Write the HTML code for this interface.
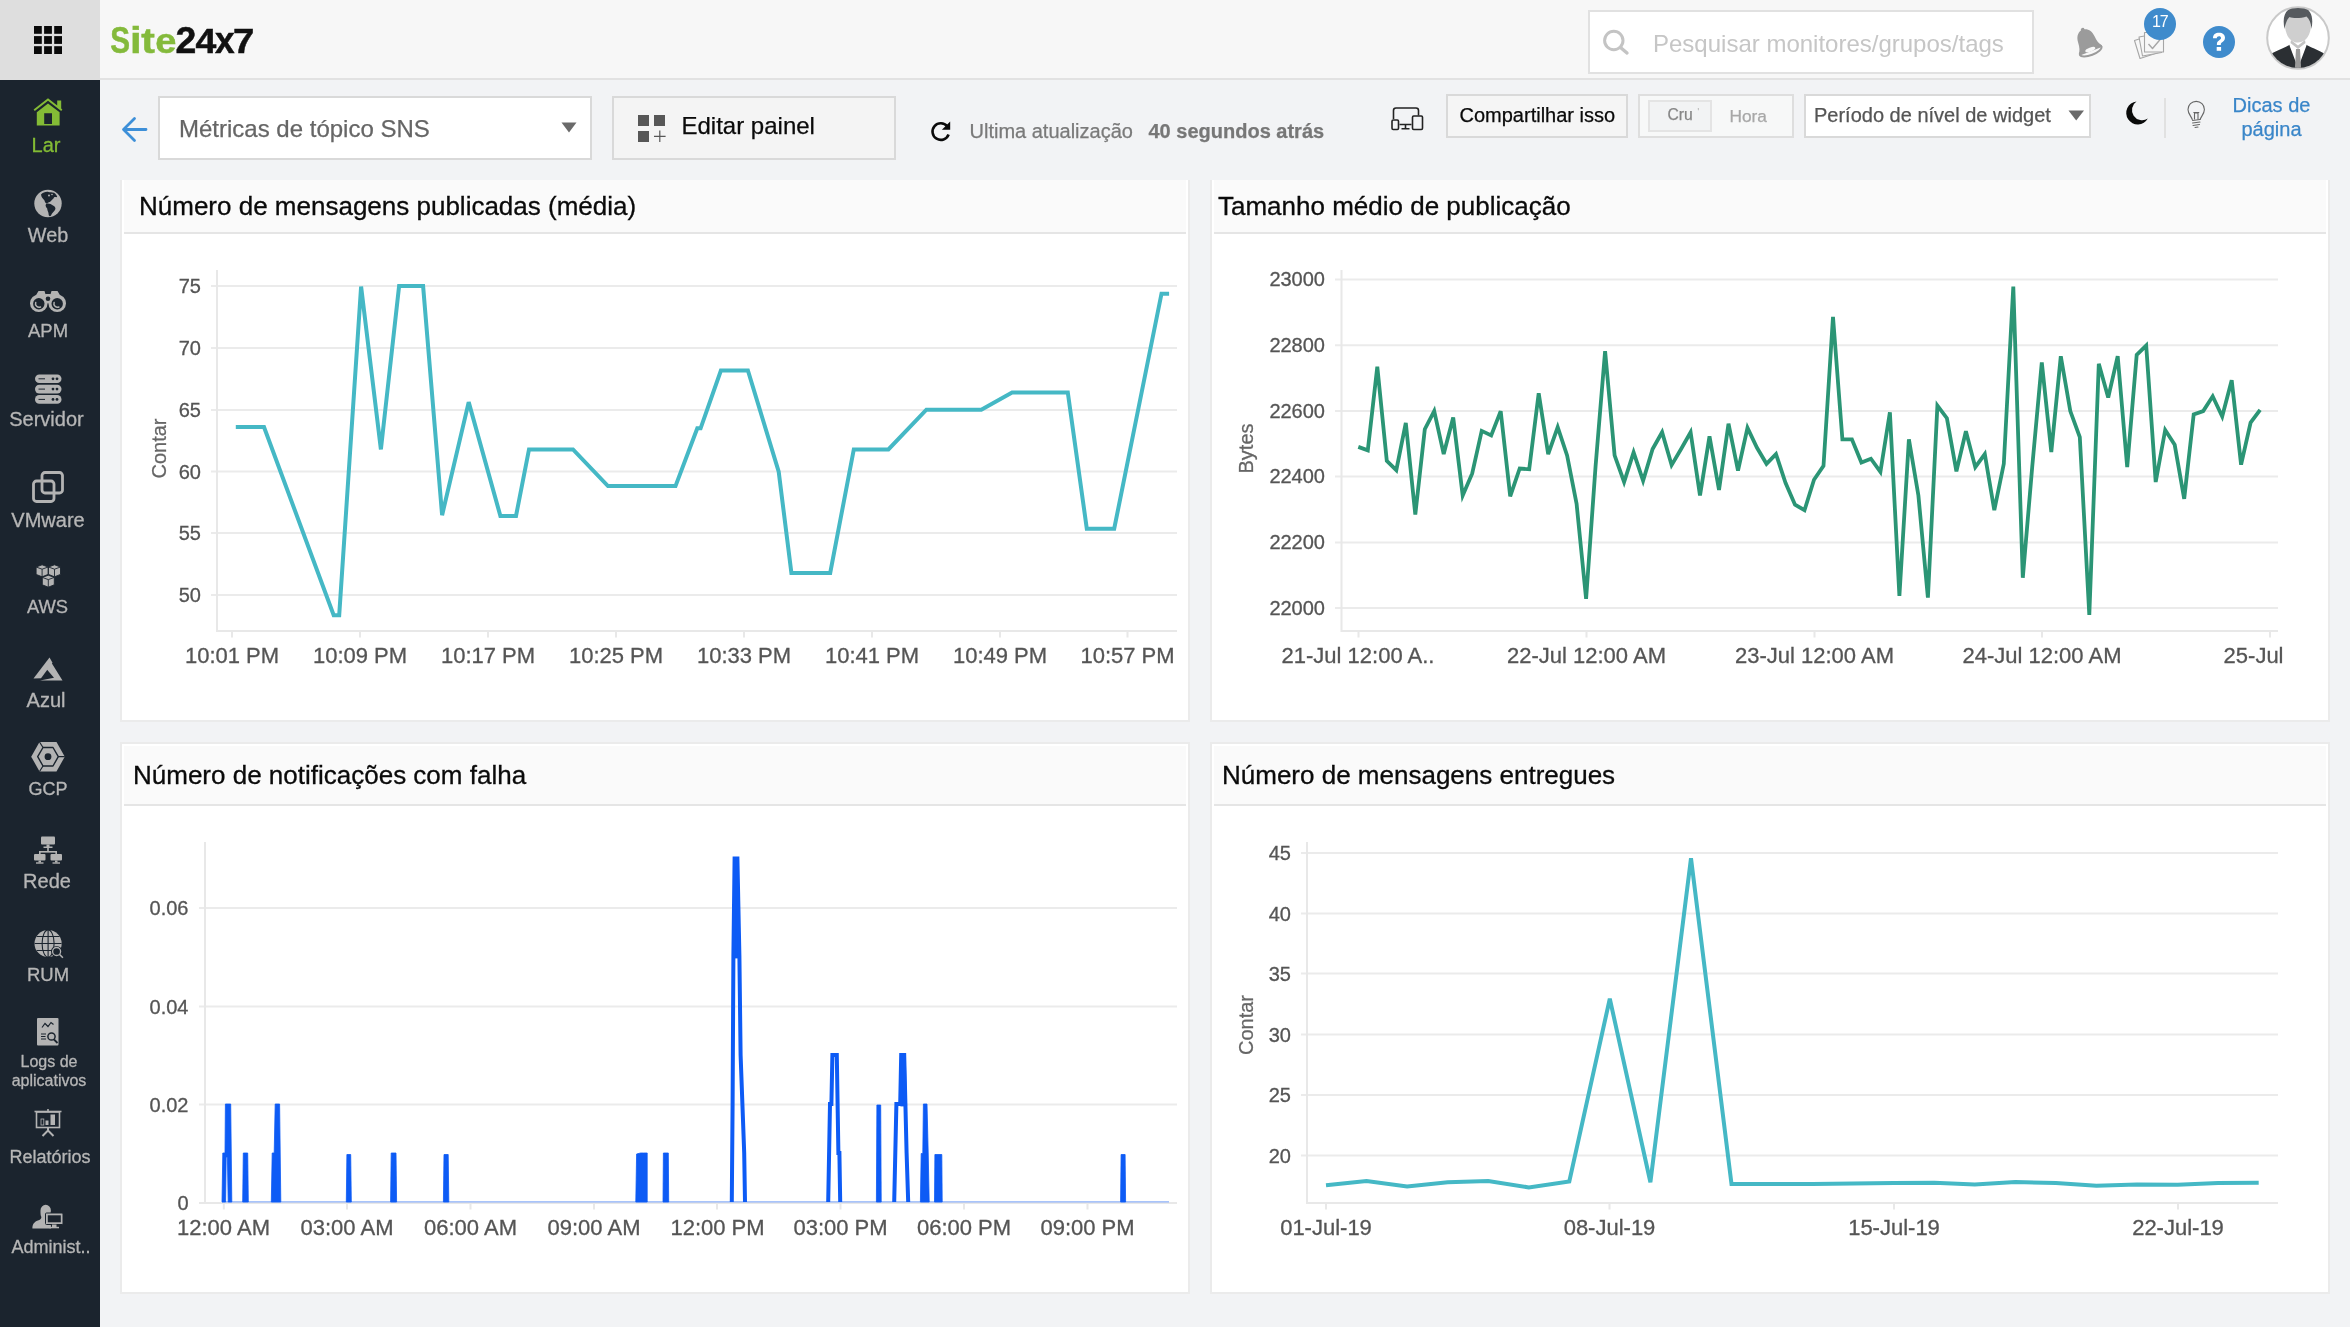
<!DOCTYPE html>
<html lang="pt">
<head>
<meta charset="utf-8">
<title>Site24x7</title>
<style>
*{box-sizing:border-box;margin:0;padding:0}
html,body{width:2350px;height:1327px;overflow:hidden;background:#f2f3f5;font-family:"Liberation Sans",sans-serif;}
.abs{position:absolute}
#page{position:relative;width:2350px;height:1327px;overflow:hidden;will-change:transform}
#hdr{position:absolute;left:0;top:0;width:2350px;height:80px;background:#f7f7f7;border-bottom:2px solid #e2e2e2}
#gridbtn{position:absolute;left:0;top:0;width:100px;height:80px;background:#dedede}
#side{position:absolute;left:0;top:80px;width:100px;height:1247px;background:#1b242e}
.sl{position:absolute;left:0;width:100px;text-align:center;color:#b6b6b6;-webkit-text-stroke:0.3px;font-size:20px;line-height:24px;white-space:nowrap}
.logo{position:absolute;left:110px;top:15.5px;font-size:36px;font-weight:bold;letter-spacing:-0.55px;-webkit-text-stroke:0.5px;line-height:50px;white-space:nowrap}
.search{position:absolute;left:1588px;top:10px;width:446px;height:64px;border:2px solid #e1e1e1;background:#fff}
.search span{position:absolute;left:63px;top:17.700px;font-size:24px;line-height:28px;color:#c6c6c6;white-space:nowrap}
.box{position:absolute;border:2px solid #d9d9d9}
.t{position:absolute;white-space:nowrap;line-height:1;-webkit-text-stroke:0.25px}
.panel{position:absolute;background:#fff;border:2px solid #ebebeb}
.ph{position:absolute;background:#fafafa;border-bottom:2px solid #e5e5e5}
.pt{position:absolute;font-size:26px;color:#0a0a0a;-webkit-text-stroke:0.3px #0a0a0a;white-space:nowrap;line-height:30px}
svg{position:absolute;left:0;top:0;overflow:visible}
svg text{font-family:"Liberation Sans",sans-serif}
</style>
</head>
<body>
<div id="page">

<!-- ================= PANELS ================= -->
<div class="panel" style="left:120px;top:170px;width:1070px;height:552px"></div>
<div class="ph" style="left:124px;top:174px;width:1062px;height:60px"></div>
<div class="panel" style="left:1210px;top:170px;width:1120px;height:552px"></div>
<div class="ph" style="left:1214px;top:174px;width:1112px;height:60px"></div>
<div class="panel" style="left:120px;top:742px;width:1070px;height:552px"></div>
<div class="ph" style="left:124px;top:746px;width:1062px;height:60px"></div>
<div class="panel" style="left:1210px;top:742px;width:1120px;height:552px"></div>
<div class="ph" style="left:1214px;top:746px;width:1112px;height:60px"></div>

<div class="pt" style="left:139px;top:190.700px">Número de mensagens publicadas (média)</div>
<div class="pt" style="left:1218px;top:190.700px">Tamanho médio de publicação</div>
<div class="pt" style="left:133px;top:760px">Número de notificações com falha</div>
<div class="pt" style="left:1222px;top:760px">Número de mensagens entregues</div>

<!-- ================= CHARTS ================= -->
<svg width="2350" height="1327" viewBox="0 0 2350 1327">
<g fill="none" stroke="#ebebeb" stroke-width="2">
<!-- chart1 grid -->
<path d="M211 286H1177M211 348H1177M211 410H1177M211 471.5H1177M211 533H1177M211 595H1177"/>
<!-- chart2 grid -->
<path d="M1335 279.600H2278M1335 345.200H2278M1335 411H2278M1335 476.600H2278M1335 542.400H2278M1335 608H2278"/>
<!-- chart3 grid -->
<path d="M199 908H1177M199 1006.5H1177M199 1104.5H1177"/>
<!-- chart4 grid -->
<path d="M1301 853H2278M1301 913.5H2278M1301 973.5H2278M1301 1034.5H2278M1301 1095H2278M1301 1155.5H2278"/>
</g>
<g fill="none" stroke="#e8e8e8" stroke-width="2">
<!-- axes -->
<path d="M217 270V631H1177"/>
<path d="M1341.500 270V631H2278"/>
<path d="M205 842V1203H1177M199 1203H205"/>
<path d="M1307 842V1203H2278"/>
<!-- x ticks -->
<path d="M232 631V637.500M360 631V637.500M488 631V637.500M616 631V637.500M744 631V637.500M872 631V637.500M1000 631V637.500M1127.5 631V637.500"/>
<path d="M1358.5 631V637.500M1586.5 631V637.500M1814.5 631V637.500M2042 631V637.500M2270 631V637.500"/>
<path d="M223.800 1203V1209.500M347 1203V1209.500M470.5 1203V1209.500M594 1203V1209.500M717 1203V1209.500M840.5 1203V1209.500M964 1203V1209.500M1087.5 1203V1209.500"/>
<path d="M1326 1203V1209.500M1609.5 1203V1209.500M1894 1203V1209.500M2178 1203V1209.500"/>
</g>
<!-- y labels -->
<g font-size="20" fill="#555" stroke="#555" stroke-width="0.300" text-anchor="end">
<text x="201" y="293">75</text><text x="201" y="355">70</text><text x="201" y="417">65</text><text x="201" y="478.5">60</text><text x="201" y="540">55</text><text x="201" y="602">50</text>
<text x="1325" y="286">23000</text><text x="1325" y="351.5">22800</text><text x="1325" y="417.5">22600</text><text x="1325" y="483">22400</text><text x="1325" y="549">22200</text><text x="1325" y="614.5">22000</text>
<text x="188.500" y="915">0.06</text><text x="188.500" y="1013.5">0.04</text><text x="188.500" y="1111.5">0.02</text><text x="188.500" y="1210">0</text>
<text x="1291" y="860">45</text><text x="1291" y="920.5">40</text><text x="1291" y="980.5">35</text><text x="1291" y="1041.5">30</text><text x="1291" y="1102">25</text><text x="1291" y="1162.5">20</text>
</g>
<!-- axis titles -->
<g font-size="20" fill="#666" stroke="#666" stroke-width="0.250" text-anchor="middle">
<text transform="translate(165.500 448.5) rotate(-90)">Contar</text>
<text transform="translate(1252.500 448.5) rotate(-90)" font-size="20">Bytes</text>
<text transform="translate(1252.500 1025) rotate(-90)">Contar</text>
</g>
<!-- x labels -->
<g font-size="22" fill="#555" stroke="#555" stroke-width="0.300" text-anchor="middle">
<text x="232" y="663">10:01 PM</text><text x="360" y="663">10:09 PM</text><text x="488" y="663">10:17 PM</text><text x="616" y="663">10:25 PM</text><text x="744" y="663">10:33 PM</text><text x="872" y="663">10:41 PM</text><text x="1000" y="663">10:49 PM</text><text x="1127.5" y="663">10:57 PM</text>
<text x="1358" y="663">21-Jul 12:00 A..</text><text x="1586.5" y="663">22-Jul 12:00 AM</text><text x="1814.5" y="663">23-Jul 12:00 AM</text><text x="2042" y="663">24-Jul 12:00 AM</text><text x="2283.500" y="663" text-anchor="end">25-Jul</text>
<text x="223.500" y="1235">12:00 AM</text><text x="347" y="1235">03:00 AM</text><text x="470.5" y="1235">06:00 AM</text><text x="594" y="1235">09:00 AM</text><text x="717.5" y="1235">12:00 PM</text><text x="840.5" y="1235">03:00 PM</text><text x="964" y="1235">06:00 PM</text><text x="1087.5" y="1235">09:00 PM</text>
<text x="1326" y="1235">01-Jul-19</text><text x="1609.5" y="1235">08-Jul-19</text><text x="1894" y="1235">15-Jul-19</text><text x="2178" y="1235">22-Jul-19</text>
</g>
<!-- series -->
<polyline fill="none" stroke="#45b8c5" stroke-width="4" stroke-linejoin="miter" points="235.8,427.0 264.0,427.0 333.7,615.2 339.2,615.2 361.1,286.6 380.9,449.4 399.1,286.0 423.1,286.0 442.1,515.2 468.7,402.1 500.4,516.0 516.0,516.0 529.0,449.4 573.0,449.4 608.0,486.1 675.5,486.1 697.3,428.3 700.6,428.3 720.9,370.5 747.9,370.5 778.7,471.7 791.4,573.0 830.2,573.0 853.8,449.4 888.4,449.4 926.4,409.7 981.3,409.7 1012.1,392.4 1067.8,392.4 1086.8,528.7 1114.2,528.7 1161.5,293.7 1169.1,293.7"/>
<polyline fill="none" stroke="#2b9575" stroke-width="3.800" stroke-linejoin="miter" points="1358.3,446.9 1367.8,450.3 1377.3,366.7 1386.8,460.9 1396.3,470.1 1405.8,422.9 1415.3,514.5 1424.8,429.2 1434.2,411.1 1443.7,454.1 1453.2,417.4 1462.7,495.5 1472.2,473.5 1481.7,430.9 1491.2,435.5 1500.7,411.1 1510.2,496.3 1519.7,468.5 1529.2,469.3 1538.7,393.3 1548.2,454.1 1557.7,427.1 1567.1,455.4 1576.6,503.9 1586.1,598.9 1595.6,465.9 1605.1,351.1 1614.6,455.4 1624.1,482.0 1633.6,452.4 1643.1,480.7 1652.6,449.0 1662.1,432.2 1671.6,465.1 1681.1,449.0 1690.6,432.2 1700.0,495.5 1709.5,436.4 1719.0,490.0 1728.5,423.7 1738.0,470.6 1747.5,427.9 1757.0,447.8 1766.5,463.8 1776.0,454.1 1785.5,482.8 1795.0,504.7 1804.5,510.2 1814.0,479.8 1823.5,465.9 1833.0,316.9 1842.4,439.3 1851.9,439.3 1861.4,462.5 1870.9,458.7 1880.4,471.8 1889.9,412.3 1899.4,595.9 1908.9,439.3 1918.4,495.5 1927.9,597.6 1937.4,405.6 1946.9,418.2 1956.4,471.4 1965.9,431.3 1975.3,467.2 1984.8,454.1 1994.3,510.2 2003.8,463.8 2013.3,286.6 2022.8,577.8 2032.3,465.9 2041.8,362.5 2051.3,452.0 2060.8,356.2 2070.3,411.1 2079.8,437.2 2089.3,614.9 2098.8,363.8 2108.2,397.6 2117.7,356.2 2127.2,467.2 2136.7,354.9 2146.2,345.6 2155.7,482.0 2165.2,430.0 2174.7,444.8 2184.2,498.8 2193.7,414.4 2203.2,411.1 2212.7,396.3 2222.2,416.5 2231.7,380.2 2241.1,464.7 2250.6,422.5 2260.1,409.8"/>
<polyline fill="none" stroke="#45b8c5" stroke-width="4" stroke-linejoin="miter" points="1326.0,1185.2 1366.5,1181.0 1407.1,1186.5 1447.7,1182.3 1488.2,1181.0 1528.8,1187.4 1569.3,1181.4 1609.8,998.7 1650.4,1182.3 1691.0,858.2 1731.5,1184.0 1772.0,1184.0 1812.6,1184.0 1853.2,1183.6 1893.7,1183.1 1934.2,1182.7 1974.8,1184.4 2015.3,1181.9 2055.9,1183.1 2096.4,1185.7 2137.0,1184.4 2177.6,1184.8 2218.1,1183.1 2258.7,1182.7"/>
<!-- chart3 -->
<path d="M222 1201.800H1169" stroke="#8db0f8" stroke-width="1.200" fill="none"/>
<g fill="#0d5bf5" stroke="#0d5bf5" stroke-width="0.800" stroke-linejoin="round">
<polygon points="222.0,1202.0 222.8,1153.0 225.0,1153.0 225.4,1104.0 230.7,1104.0 231.8,1202.0 228.2,1202.0 227.4,1157.0 226.2,1157.0 225.6,1202.0"/>
<polygon points="242.7,1202.0 243.3,1153.0 247.7,1153.0 248.3,1202.0"/>
<polygon points="271.3,1202.0 272.2,1153.0 274.2,1153.0 275.2,1104.0 279.6,1104.0 280.8,1202.0"/>
<polygon points="346.3,1202.0 346.9,1154.5 350.7,1154.5 351.3,1202.0"/>
<polygon points="390.6,1202.0 391.2,1153.0 396.0,1153.0 396.6,1202.0"/>
<polygon points="443.4,1202.0 444.0,1154.5 448.2,1154.5 448.8,1202.0"/>
<polygon points="635.8,1202.0 636.6,1154.0 640.5,1153.0 643.5,1153.0 647.2,1153.0 647.2,1202.0"/>
<polygon points="663.0,1202.0 663.4,1153.0 668.3,1153.0 668.7,1202.0"/>
<polygon points="876.4,1202.0 876.9,1105.0 880.7,1105.0 881.2,1202.0"/>
<polygon points="934.5,1202.0 934.9,1154.5 941.8,1154.5 942.2,1202.0"/>
<polygon points="1120.6,1202.0 1121.1,1154.5 1125.1,1154.5 1125.6,1202.0"/>
<polygon points="733.2,958.0 734.4,858.0 737.6,858.0 739.6,958.0"/>
<polygon points="920.4,1202.0 921.2,1153.5 922.8,1153.5 923.4,1104.0 927.0,1104.0 928.2,1153.0 929.2,1202.0"/>
<polygon points="900.4,1106.0 900.9,1054.5 905.2,1054.5 906.6,1106.0"/>
</g>
<g fill="none" stroke="#0d5bf5" stroke-width="4" stroke-linejoin="miter">
<polyline points="731.8,1202.0 732.6,1104.0 733.4,956.0 734.6,858.5 737.4,858.5 739.4,956.0 740.6,1055.0 742.4,1104.0 744.2,1153.0 745.0,1202.0"/>
<polyline points="828.2,1202.0 830.0,1104.0 831.4,1104.0 832.4,1055.0 836.8,1055.0 838.4,1153.0 839.4,1153.0 840.2,1202.0"/>
<polyline points="894.2,1202.0 896.4,1104.0 900.2,1104.0 901.2,1055.0 904.2,1055.0 906.6,1153.0 908.2,1202.0"/>
</g>

</svg>

<!-- toolbar cover (hides top of first row panels) -->
<div class="abs" style="left:100px;top:80px;width:2250px;height:100px;background:#f2f3f5"></div>

<!-- ================= TOOLBAR ================= -->
<div class="box" style="left:158px;top:96px;width:434px;height:64px;background:#fff"></div>
<div class="t" style="left:179px;top:114.5px;font-size:24px;color:#666;line-height:28px">Métricas de tópico SNS</div>
<div class="box" style="left:612px;top:96px;width:284px;height:64px;background:#f4f4f4"></div>
<div class="t" style="left:681.5px;top:112px;font-size:24px;color:#0a0a0a;line-height:28px">Editar painel</div>
<div class="t" style="left:969.5px;top:119px;font-size:20px;color:#7a7a7a;line-height:24px">Ultima atualização</div>
<div class="t" style="left:1148.5px;top:119px;font-size:20px;color:#777;font-weight:bold;line-height:24px">40 segundos atrás</div>
<div class="box" style="left:1446px;top:94px;width:182px;height:44px;background:#f5f5f5"></div>
<div class="t" style="left:1459.500px;top:103px;font-size:20px;color:#0a0a0a;line-height:24px">Compartilhar isso</div>
<div class="box" style="left:1638px;top:94px;width:156px;height:44px;background:#f7f8f8;border-color:#dedede"></div>
<div class="box" style="left:1648px;top:100px;width:64px;height:32px;background:#f2f3f4;border-color:#e4e4e4"></div>
<div class="t" style="left:1667.500px;top:105.200px;font-size:15.700px;color:#868686;line-height:20px">Cru</div>
<div class="t" style="left:1697.500px;top:105px;font-size:9px;color:#bbb;line-height:12px">'</div>
<div class="t" style="left:1729.500px;top:105.500px;font-size:17.300px;color:#a8a8a8;line-height:20px">Hora</div>
<div class="box" style="left:1804px;top:94px;width:287px;height:44px;background:#fff"></div>
<div class="t" style="left:1814px;top:103px;font-size:20px;color:#555;line-height:24px">Período de nível de widget</div>
<div class="t" style="left:2211.500px;top:93px;width:120px;text-align:center;font-size:20px;color:#3a86c9;line-height:24px;white-space:normal">Dicas de<br>página</div>
<!-- back arrow -->
<svg width="2350" height="1327" viewBox="0 0 2350 1327" style="pointer-events:none">
<path d="M146 129.500H124.500M134.500 118.500L123.500 129.500L134.500 140.500" fill="none" stroke="#3d8fd8" stroke-width="2.800" stroke-linecap="round" stroke-linejoin="round"/>
<!-- select1 caret -->
<path d="M561.500 122.500H576.500L569 132.500Z" fill="#6a6a6a"/>
<!-- edit icon -->
<g fill="#575757"><rect x="638" y="115" width="11" height="11"/><rect x="654" y="115" width="11" height="11"/><rect x="638" y="131" width="11" height="11"/>
<path d="M659.200 130.500h1.200v5.200h5.200v1.200h-5.200v5.200h-1.200v-5.200h-5.200v-1.200h5.200z"/></g>
<!-- refresh icon -->
<path d="M947.300 126.400A8.300 8.300 0 1 0 948.600 134.500" fill="none" stroke="#0a0a0a" stroke-width="2.600"/>
<path d="M950.200 121.500V129.800H941.900Z" fill="#0a0a0a"/>
<!-- devices icon -->
<g fill="none" stroke="#222" stroke-width="1.600" stroke-linejoin="round">
<path d="M1393.500 119V110.500Q1393.500 108 1396 108H1416Q1418.500 108 1418.500 110.500V115.500"/>
<rect x="1392" y="120" width="6.500" height="9.500" rx="1.200" fill="#f2f3f5"/>
<rect x="1412.500" y="116" width="10" height="13.500" rx="1.200" fill="#f2f3f5"/>
<path d="M1399.500 124.500H1411.500M1405.500 124.500V128.500M1401.500 128.800H1409.500"/>
</g>
<!-- select2 caret -->
<path d="M2068.500 110.500H2084L2076.200 120.500Z" fill="#6a6a6a"/>
<!-- moon -->
<path d="M2136.500 101.500A11.500 11.500 0 1 0 2147.800 118.500A9.600 9.600 0 0 1 2136.500 101.500Z" fill="#0a0a0a"/>
<!-- divider -->
<path d="M2165 98V138" stroke="#dcdcdc" stroke-width="1.600"/>
<!-- bulb -->
<g fill="none" stroke="#666" stroke-width="1.100" stroke-linecap="round">
<path d="M2192.300 119.500C2191 116 2188 113.500 2188 109.500A8.200 8.200 0 0 1 2204.400 109.500C2204.400 113.500 2201.400 116 2200.100 119.500"/>
<path d="M2192.500 120.500L2200 119.500M2192.500 123L2200 122M2193 125.500L2199.500 124.500M2195 127.500L2198 127"/>
<path d="M2194.500 119V113H2198V119M2193.800 112.500H2198.800"/>
</g>
</svg>


<!-- ================= HEADER ================= -->
<div id="hdr"></div>
<div id="gridbtn"></div>
<svg width="300" height="80" viewBox="0 0 300 80"><g font-size="36" font-weight="bold">
<text transform="translate(110.19 52.750) scale(0.823 1.040)" fill="#84ba3b" stroke="#84ba3b" stroke-width="0.5">S</text>
<text transform="translate(130.00 52.750) scale(1.160 1.0)" fill="#84ba3b" stroke="#84ba3b" stroke-width="0.5">i</text>
<text transform="translate(141.35 52.750) scale(1.135 1.0)" fill="#84ba3b" stroke="#84ba3b" stroke-width="0.5">t</text>
<text transform="translate(155.22 52.750) scale(1.057 1.0)" fill="#84ba3b" stroke="#84ba3b" stroke-width="0.5">e</text>
<text transform="translate(175.55 52.750) scale(1.040 1.0)" fill="#111" stroke="#111" stroke-width="0.5">2</text>
<text transform="translate(195.38 52.750) scale(1.041 1.0)" fill="#111" stroke="#111" stroke-width="0.5">4</text>
<text transform="translate(215.01 52.750) scale(0.979 1.0)" fill="#111" stroke="#111" stroke-width="0.5">x</text>
<text transform="translate(233.10 52.750) scale(1.065 1.0)" fill="#111" stroke="#111" stroke-width="0.5">7</text>
</g></svg>
<div class="search"><span>Pesquisar monitores/grupos/tags</span></div>
<svg width="2350" height="80" viewBox="0 0 2350 80">
<!-- grid icon -->
<g fill="#0a0a0a">
<rect x="34" y="26" width="7.800" height="7.800"/><rect x="44.100" y="26" width="7.800" height="7.800"/><rect x="54.200" y="26" width="7.800" height="7.800"/>
<rect x="34" y="36.100" width="7.800" height="7.800"/><rect x="44.100" y="36.100" width="7.800" height="7.800"/><rect x="54.200" y="36.100" width="7.800" height="7.800"/>
<rect x="34" y="46.200" width="7.800" height="7.800"/><rect x="44.100" y="46.200" width="7.800" height="7.800"/><rect x="54.200" y="46.200" width="7.800" height="7.800"/>
</g>
<!-- search icon -->
<circle cx="1613.800" cy="40.500" r="9.200" fill="none" stroke="#c4c4c4" stroke-width="3"/>
<path d="M1620.500 47.500L1627 53" stroke="#c4c4c4" stroke-width="3.400" stroke-linecap="round"/>
<!-- bell (tilted) -->
<g transform="translate(2087.600 42.600) rotate(-21) scale(0.880)" fill="#9b9b9b">
<path d="M-2.200 -15.500a2.200 2.200 0 0 1 4.400 0C7 -14 9.500 -10 10 -4C10.400 2 11.500 5.500 14 8.500V10.500H-14V8.500C-11.500 5.500 -10.400 2 -10 -4C-9.500 -10 -7 -14 -2.200 -15.500Z"/>
<ellipse cx="0" cy="10" rx="13" ry="4.800" fill="none" stroke="#9b9b9b" stroke-width="2.200"/>
<ellipse cx="0" cy="8.500" rx="6" ry="2.200" fill="#f7f7f7"/>
</g>
<!-- papers with check -->
<g fill="#f7f7f7" stroke="#a6a6a6" stroke-width="1.100" stroke-linejoin="round">
<path d="M2134.500 40.500L2153 34.500L2158.500 52.500L2140 58.500Z"/>
<path d="M2139 37L2158 33.500L2161.500 52.500L2142.500 56Z"/>
<rect x="2144.500" y="32.500" width="19" height="19.500"/>
<path d="M2148.500 44L2152.500 48.500L2161 38.500" fill="none" stroke-width="1.400"/>
</g>
<circle cx="2160" cy="24" r="16" fill="#3f8bcc"/>
<text x="2159.800" y="27.400" font-size="16" fill="#fff" text-anchor="middle" letter-spacing="-1">17</text>
<!-- help -->
<circle cx="2219" cy="42" r="16" fill="#3f8bcc"/>
<path d="M2213 38.200C2213 34.500 2215.500 32.800 2219 32.800C2222.600 32.800 2225 34.800 2225 37.800C2225 40.500 2223.200 41.500 2221.800 42.500C2221 43.100 2220.800 43.600 2220.800 44.600V45H2216.900V44.200C2216.900 42.300 2217.500 41.400 2219 40.400C2220.200 39.600 2221 39.100 2221 38C2221 36.900 2220.200 36.300 2219 36.300C2217.700 36.300 2216.900 37 2216.800 38.200Z" fill="#fff"/>
<rect x="2216.700" y="47" width="4.400" height="3.800" fill="#fff"/>
<!-- avatar -->
<defs><clipPath id="av"><circle cx="2298" cy="38" r="30"/></clipPath></defs>
<circle cx="2298" cy="38" r="30.800" fill="#fff" stroke="#c9c9c9" stroke-width="2"/>
<g clip-path="url(#av)">
<path d="M2268 72V56C2273 52 2284 48 2290.500 44.500L2298 63L2305.500 44.500C2312 48 2323 52 2328 56V72Z" fill="#2b2f33"/>
<path d="M2290.500 42.500L2298 49L2305.500 42.500L2306.500 45.500L2299.500 64H2296.500L2289.500 45.500Z" fill="#fff"/>
<path d="M2296 49H2300L2301.200 70H2294.800Z" fill="#9a9a9a"/>
<path d="M2285 25C2285 14.500 2290 10.500 2298 10.500C2306 10.500 2311 14.500 2311 25C2311 33.500 2306.500 42.500 2298 42.500C2289.500 42.500 2285 33.500 2285 25Z" fill="#cfcfcf"/>
<path d="M2284.500 29C2281.500 14 2287 7 2297.500 7C2308.500 6.500 2314.500 13 2311.500 29C2311 23 2309.500 19 2306.500 16.500C2301 18.500 2293 18.500 2289.500 17C2287 19.500 2285.500 23.500 2284.500 29Z" fill="#565a5e"/>
<path d="M2291 40L2298 45.500L2305 40L2305.500 43L2298 49L2290.500 43Z" fill="#c4c4c4"/>
</g>
</svg>


<!-- ================= SIDEBAR ================= -->
<div id="side"></div>
<div class="sl" style="top:133px;color:#83bb35;left:-4px">Lar</div>
<div class="sl" style="top:223px;left:-2px;font-size:19.800px">Web</div>
<div class="sl" style="top:319px;left:-2px;font-size:18.500px">APM</div>
<div class="sl" style="top:407px;left:-3.500px">Servidor</div>
<div class="sl" style="top:508px;left:-2px">VMware</div>
<div class="sl" style="top:595px;left:-2.500px;font-size:18.400px">AWS</div>
<div class="sl" style="top:688px;left:-4px">Azul</div>
<div class="sl" style="top:777px;left:-2px;font-size:18px">GCP</div>
<div class="sl" style="top:869px;left:-3px">Rede</div>
<div class="sl" style="top:963px;left:-2px;font-size:18.500px">RUM</div>
<div class="sl" style="top:1052px;font-size:16px;line-height:19px;left:-1px">Logs de<br>aplicativos</div>
<div class="sl" style="top:1145px;font-size:18px;left:0">Relatórios</div>
<div class="sl" style="top:1235px;font-size:18px;left:1px">Administ..</div>
<svg width="100" height="1327" viewBox="0 0 100 1327">
<!-- home -->
<g fill="#84bb36">
<path d="M48 98.300L33.600 109.600L34.800 111.100L48 100.800L61.200 111.100L62.400 109.600L61.200 108.600V100.500H57.200V105.500Z"/>
<path d="M36.800 112.200L48 103.400L59.600 112.200V125.400H36.800ZM44.200 113.200V124H52V113.200Z"/>
</g>
<!-- globe -->
<circle cx="48" cy="203.500" r="13.700" fill="#b3b3b3"/>
<g fill="#1b242e">
<path d="M41 194.500C43 192.500 46 191.500 48.500 192C50 192.500 52 192 54 192.800C55.500 193.800 57 195.500 57.200 197C56 197.500 55 196.500 54 197.500C53.500 199 52 199.500 51 201C50 202.500 48 202 47 203.500C45.500 203.500 44.800 202 44.500 200.500C43.500 199 42 198 41.500 196.500Z"/>
<path d="M46 204C48 203 51 204 53 205.500C55 206.500 56.200 208 55 210C53.800 212 52 213 51 215.500C50 217 48.600 216 48.600 214C48.600 212 47.200 210.500 47.200 208.500C46 207 45 205.500 46 204Z"/>
</g>
<g fill="#b3b3b3"><circle cx="49" cy="195.500" r="1"/><circle cx="52" cy="194.500" r="0.800"/></g>
<!-- binoculars -->
<g fill="#b3b3b3">
<circle cx="38.800" cy="303.300" r="8.800"/><circle cx="57.200" cy="303.300" r="8.800"/>
<path d="M35.500 296L38.500 291H44.500L46 296V301H35.500ZM50 296L51.500 291H57.500L60.500 296V301H50Z"/>
<rect x="43.500" y="294" width="9" height="9" rx="2.500"/>
</g>
<g fill="#1b242e"><circle cx="38.800" cy="303.800" r="5.700"/><circle cx="57.200" cy="303.800" r="5.700"/><circle cx="48" cy="298.800" r="2.300"/></g>
<g fill="none" stroke="#b3b3b3" stroke-width="1.500" stroke-linecap="round"><path d="M35.700 302.500A3.600 3.600 0 0 0 40.500 307"/><path d="M54.100 302.500A3.600 3.600 0 0 0 58.900 307"/></g>
<!-- server -->
<g fill="#b3b3b3"><rect x="35" y="374.500" width="26.500" height="8.600" rx="4.300"/><rect x="35" y="384.800" width="26.500" height="8.600" rx="4.300"/><rect x="35" y="395.100" width="26.500" height="8.600" rx="4.300"/></g>
<g fill="#1b242e"><circle cx="53" cy="378.800" r="1.400"/><circle cx="57" cy="378.800" r="1.400"/><circle cx="53" cy="389.100" r="1.400"/><circle cx="57" cy="389.100" r="1.400"/><circle cx="53" cy="399.400" r="1.400"/><circle cx="57" cy="399.400" r="1.400"/>
<rect x="38.500" y="378.300" width="6.500" height="1"/><rect x="38.500" y="388.600" width="6.500" height="1"/><rect x="38.500" y="398.900" width="6.500" height="1"/></g>
<!-- vmware -->
<g fill="none" stroke="#b3b3b3" stroke-width="2.800"><rect x="42" y="472.500" width="20.500" height="20.500" rx="3"/><rect x="33.500" y="481" width="20.500" height="20.500" rx="3" /></g>
<!-- aws cubes -->
<g fill="#b3b3b3" stroke="#1b242e" stroke-width="0.900" stroke-linejoin="round">
<path d="M42.1 564.8L48.1 567.0V574.4L42.1 576.8L36.1 574.4V567.0Z"/><path d="M36.1 567.0L42.1 569.1999999999999L48.1 567.0M42.1 569.1999999999999V576.8" fill="none"/><path d="M54.5 564.8L60.5 567.0V574.4L54.5 576.8L48.5 574.4V567.0Z"/><path d="M48.5 567.0L54.5 569.1999999999999L60.5 567.0M54.5 569.1999999999999V576.8" fill="none"/><path d="M48.3 575.2L54.3 577.4000000000001V584.8000000000001L48.3 587.2L42.3 584.8000000000001V577.4000000000001Z"/><path d="M42.3 577.4000000000001L48.3 579.6L54.3 577.4000000000001M48.3 579.6V587.2" fill="none"/>
</g>
<!-- azure -->
<g fill="#b3b3b3"><path d="M49.500 657.500L33.500 678.500L41 678.300L52.500 662.800Z"/><path d="M51 662L62.500 680.500L40 680.500L54 677.800L46.500 669Z"/></g>
<!-- gcp hexagon -->
<path d="M39.500 742L56.500 742L64.800 756.700L56.500 771.500L39.500 771.500L31.200 756.700Z" fill="#b3b3b3"/>
<g fill="none" stroke="#1b242e" stroke-width="1.400" stroke-linejoin="round">
<path d="M43 747.500L53 747.500L58.300 756.700L53 766L43 766L37.700 756.700Z"/>
<path d="M43 747.500L39.500 742M58.300 756.700L64.800 756.700M43 766L39.500 771.500" stroke-width="1.200"/>
</g>
<circle cx="48" cy="756.700" r="5.400" fill="#b3b3b3"/>
<circle cx="48" cy="756.700" r="3.400" fill="#1b242e"/>
<!-- network -->
<g fill="#b3b3b3">
<rect x="41" y="836.500" width="14" height="8" rx="1"/><rect x="46.500" y="844.500" width="3" height="2.500"/><rect x="43.500" y="846.500" width="9" height="1.500"/>
<rect x="47.200" y="848" width="1.600" height="4"/><rect x="39" y="851" width="18" height="1.600"/><rect x="39" y="851" width="1.600" height="4"/><rect x="55.400" y="851" width="1.600" height="4"/>
<rect x="34" y="854" width="11.500" height="6.500" rx="1"/><rect x="38.500" y="860.500" width="2.500" height="2"/><rect x="36" y="862.300" width="7.500" height="1.400"/>
<rect x="50.500" y="854" width="11.500" height="6.500" rx="1"/><rect x="55" y="860.500" width="2.500" height="2"/><rect x="52.500" y="862.300" width="7.500" height="1.400"/>
</g>
<!-- rum globe -->
<g transform="translate(1.100 0)">
<circle cx="47" cy="943.500" r="13.600" fill="#b3b3b3"/>
<g fill="none" stroke="#1b242e" stroke-width="1.100"><ellipse cx="47" cy="943.500" rx="6" ry="13.600"/><path d="M47 930V957M33.500 943.500H60.500M35.500 936.500H58.500M35.500 950.500H58.500"/></g>
<circle cx="55.500" cy="951.500" r="5.600" fill="#1b242e"/><circle cx="55.500" cy="951.500" r="4" fill="none" stroke="#b3b3b3" stroke-width="1.300"/><path d="M58.500 954.500L61.800 957.800" stroke="#b3b3b3" stroke-width="1.600"/>
</g>
<!-- logs -->
<rect x="37" y="1018" width="21.500" height="27.500" rx="1" fill="#b3b3b3"/>
<g fill="none" stroke="#1b242e" stroke-width="1.200"><path d="M42 1027.500L45 1023.500L48 1026.500L51 1022.500L53.500 1024.500"/><path d="M41 1034H46M41 1036.500H45.500M41 1039H46"/><circle cx="51.500" cy="1036.500" r="3.600" stroke-width="1.500"/><path d="M54 1039.500L57.500 1043" stroke-width="1.800"/></g>
<!-- reports -->
<g fill="none" stroke="#b3b3b3" stroke-width="1.600"><path d="M34.500 1111.500H61.500"/><rect x="36.500" y="1112" width="23" height="15.500"/><path d="M48 1128V1131M48 1130.500L42.500 1136M48 1130.500L53.500 1136" stroke-width="2"/><path d="M48 1109V1111.500"/></g>
<g fill="#b3b3b3"><rect x="41" y="1119" width="2.800" height="6" fill="none" stroke="#b3b3b3" stroke-width="0.800"/><rect x="45.500" y="1120.500" width="3" height="4.500"/><rect x="50.500" y="1114.500" width="4.500" height="10.500"/></g>
<!-- admin -->
<g fill="#b3b3b3">
<path d="M40.500 1210.500a5.200 5.700 0 0 1 10.400 0c0 3 -1.500 5 -2.500 6c0 1.500 1 2 2.500 2.500v9.500h-18.500c0 -4 1.500 -6.500 5.500 -8c2 -.8 3.500 -1.500 3.500 -3.500c-.8 -1.200 -1 -3.500 -.9 -6.500Z"/>
<rect x="45.500" y="1213" width="17.500" height="11.500" rx="1" stroke="#1b242e" stroke-width="1"/>
<rect x="52" y="1224.500" width="4.500" height="2.500"/><rect x="49.500" y="1226.800" width="9.500" height="1.500"/>
</g>
<rect x="47.800" y="1215.300" width="13" height="7" fill="#1b242e"/>
</svg>


</div>
</body>
</html>
